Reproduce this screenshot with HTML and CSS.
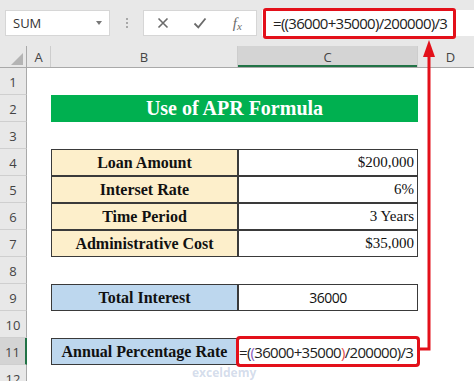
FILE: index.html
```html
<!DOCTYPE html>
<html>
  <head>
    <title>Use of APR Formula</title>
    <link rel="stylesheet" href="styles.css">
  </head>
  <body>
    <div class="app">
      <!-- name box + formula bar -->
      <div class="toolbar">
        <div class="namebox">
          <span>SUM</span>
          <span class="caret"></span>
        </div>
        <div class="grip"><i></i><i></i><i></i></div>
        <div class="fnbox">
          <span class="fn-btn">
            <svg width="12" height="12" viewBox="0 0 12 12"><path d="M1.5 1.5l9 9M10.5 1.5l-9 9" stroke="#6b6b6b" stroke-width="1.6" fill="none"/></svg>
          </span>
          <span class="fn-btn">
            <svg width="14" height="12" viewBox="0 0 14 12"><path d="M1.5 6.5l3.8 3.8L12.5 1.5" stroke="#6b6b6b" stroke-width="1.8" fill="none"/></svg>
          </span>
          <span class="fn-btn fx"><i>f</i><span>x</span></span>
        </div>
        <div class="formula-input">
          <div class="formula-hl">=((36000+35000)/200000)/3</div>
        </div>
      </div>

      <!-- sheet -->
      <div class="sheet">
        <div class="row colheads">
          <div class="corner"><span class="tri"></span></div>
          <div class="ch">A</div>
          <div class="ch">B</div>
          <div class="ch selected">C</div>
          <div class="ch">D</div>
        </div>

        <div class="row"><div class="rh">1</div></div>
        <div class="row">
          <div class="rh">2</div><div></div>
          <div class="banner">Use of APR Formula</div>
        </div>
        <div class="row"><div class="rh">3</div></div>
        <div class="row">
          <div class="rh">4</div><div></div>
          <div class="cell label tan">Loan Amount</div>
          <div class="cell value">$200,000</div>
        </div>
        <div class="row">
          <div class="rh">5</div><div></div>
          <div class="cell label tan">Interset Rate</div>
          <div class="cell value">6%</div>
        </div>
        <div class="row">
          <div class="rh">6</div><div></div>
          <div class="cell label tan">Time Period</div>
          <div class="cell value">3 Years</div>
        </div>
        <div class="row">
          <div class="rh">7</div><div></div>
          <div class="cell label tan">Administrative Cost</div>
          <div class="cell value">$35,000</div>
        </div>
        <div class="row"><div class="rh">8</div></div>
        <div class="row">
          <div class="rh">9</div><div></div>
          <div class="cell label blue">Total Interest</div>
          <div class="cell num">36000</div>
        </div>
        <div class="row"><div class="rh">10</div></div>
        <div class="row">
          <div class="rh active">11</div><div></div>
          <div class="cell label blue">Annual Percentage Rate</div>
          <div class="cell formula">=(<span class="p1">(</span>36000+35000<span class="p2">)</span>/200000)/3</div>
        </div>
        <div class="row"><div class="rh">12</div></div>
      </div>

      <!-- callout arrow from C11 up to the formula bar -->
      <svg class="callout" width="474" height="381" viewBox="0 0 474 381">
        <polyline points="419,349 429,349 429,56" stroke="#e3101a" stroke-width="3" fill="none"/>
        <polygon points="423,57 429,40 435,57" fill="#e3101a"/>
      </svg>

      <div class="watermark">exceldemy</div>
    </div>
  </body>
</html>
```

FILE: styles.css
```css
body {
  margin: 0;
  background: #ffffff;
  font-family: "Open Sans", "Noto Sans", sans-serif;
}

.app {
  position: relative;
  width: 474px;
  height: 381px;
  overflow: hidden;
}

/* Formula bar */
.toolbar {
  display: flex;
  align-items: center;
  height: 46px;
  background: #e8e8e8;
}
.namebox {
  display: flex;
  align-items: center;
  justify-content: space-between;
  box-sizing: border-box;
  width: 105px;
  height: 26px;
  margin-left: 5px;
  padding: 0 7px 0 7px;
  background: #fff;
  border: 1px solid #d6d6d6;
  font-size: 13px;
  color: #333;
}
.caret {
  width: 0;
  height: 0;
  border-left: 3.5px solid transparent;
  border-right: 3.5px solid transparent;
  border-top: 4px solid #777;
}
.grip {
  display: flex;
  flex-direction: column;
  align-items: center;
  gap: 2px;
  width: 33px;
}
.grip i {
  width: 2px;
  height: 2px;
  background: #a8a8a8;
}
.fnbox {
  display: flex;
  align-items: center;
  box-sizing: border-box;
  width: 114px;
  height: 26px;
  background: #fff;
  border: 1px solid #d6d6d6;
}
.fn-btn {
  display: flex;
  align-items: center;
  justify-content: center;
  width: 38px;
}
.fx {
  font-family: "Liberation Serif", serif;
  color: #6b6b6b;
  font-size: 15px;
}
.fx span {
  font-size: 11px;
  font-style: italic;
  margin-top: 5px;
}
.formula-input {
  flex: 1;
  display: flex;
  align-items: center;
  height: 26px;
  margin-left: 5px;
  background: #fff;
}
.formula-hl {
  display: flex;
  align-items: center;
  box-sizing: border-box;
  width: 193px;
  height: 31px;
  margin-left: 1px;
  padding-left: 7px;
  border: 3px solid #e3101a;
  border-radius: 3px;
  font-size: 15px;
  letter-spacing: -0.7px;
  color: #222;
  white-space: nowrap;
}

/* Sheet grid */
.row {
  display: grid;
  grid-template-columns: 27px 24px 187px 180px 66px;
  height: 27px;
}
.colheads {
  height: 21px;
  background: #e8e8e8;
  border-bottom: 1px solid #a9a9a9;
}
.corner {
  position: relative;
  border-right: 1px solid #a9a9a9;
}
.tri {
  position: absolute;
  right: 3px;
  bottom: 2px;
  width: 0;
  height: 0;
  border-left: 12px solid transparent;
  border-bottom: 12px solid #b4b4b4;
}
.ch {
  display: flex;
  align-items: center;
  justify-content: center;
  border-right: 1px solid #cdcdcd;
  font-size: 13px;
  color: #444;
}
.ch.selected {
  background: #d4d4d4;
  box-shadow: inset 0 -2px 0 #217346;
}
.rh {
  display: flex;
  align-items: center;
  justify-content: center;
  background: #e8e8e8;
  border-right: 1px solid #a9a9a9;
  border-bottom: 1px solid #cfcfcf;
  font-size: 13px;
  color: #444;
  padding-top: 2px;
  box-sizing: border-box;
}
.rh.active {
  background: #d4d4d4;
  border-right: 2px solid #217346;
}

.banner {
  grid-column: span 2;
  display: flex;
  align-items: center;
  justify-content: center;
  background: #00b050;
  color: #fff;
  font-family: "Liberation Serif", "Times New Roman", serif;
  font-weight: bold;
  font-size: 20px;
}

.cell {
  display: flex;
  align-items: center;
  border: 1px solid #3a3a3a;
  white-space: nowrap;
  color: #111;
}
.label {
  justify-content: center;
  font-family: "Liberation Serif", "Times New Roman", serif;
  font-weight: bold;
  font-size: 16px;
}
.tan {
  background: #fdefcb;
}
.blue {
  background: #bdd7ee;
}
.value {
  justify-content: flex-end;
  padding-right: 3px;
  font-family: "Liberation Serif", "Times New Roman", serif;
  font-size: 15px;
}
.num {
  justify-content: center;
  font-size: 14px;
  letter-spacing: -0.5px;
}
.formula {
  outline: 3px solid #e3101a;
  outline-offset: -1px;
  border-radius: 2px;
  padding-left: 0;
  font-size: 15px;
  letter-spacing: -0.7px;
  color: #222;
  overflow: visible;
}
.formula .p1 {
  color: #8a5cc0;
}
.formula .p2 {
  color: #e05050;
}

/* annotation overlay */
.callout {
  position: absolute;
  top: 0;
  left: 0;
  pointer-events: none;
}
.watermark {
  position: absolute;
  left: 192px;
  top: 367px;
  font-size: 12px;
  font-weight: bold;
  line-height: 12px;
  color: rgba(110, 140, 190, 0.3);
}
```
